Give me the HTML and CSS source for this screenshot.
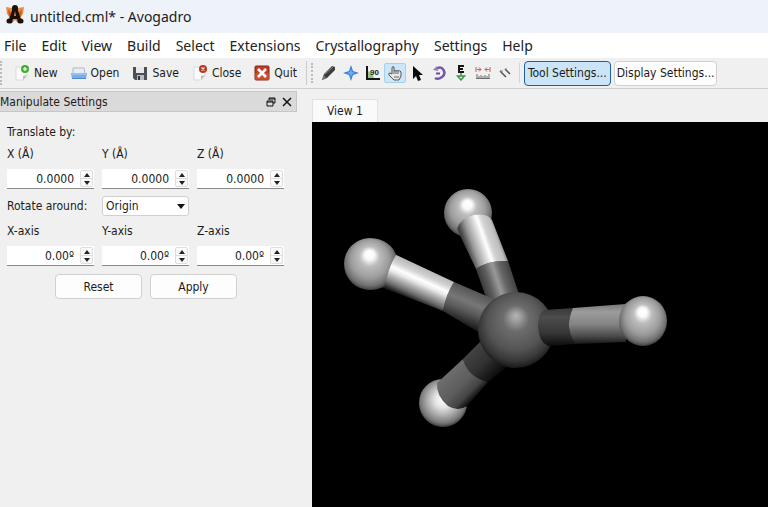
FILE: index.html
```html
<!DOCTYPE html>
<html lang="en">
<head>
<meta charset="utf-8">
<title>untitled.cml* - Avogadro</title>
<link rel="stylesheet" href="styles.css">
</head>
<body>
<header class="titlebar">
  <svg class="logo" width="20" height="20" viewBox="0 0 20 20">
    <path d="M1 2l6 1 3 4 3-4 6-1-1 7-3 3 3 5-4 2-4-4-4 4-4-2 3-5-3-3z" fill="#ef8a45"/>
    <path d="M3 4l4 5-3 4zM17 4l-4 5 3 4z" fill="#c85a1c"/>
    <path d="M8 2h4l4 13h2v3h-5l-1-4H8l-1 4H2v-3h2zM10 6l-1 5h2z" fill="#17100d" fill-rule="evenodd"/>
    <circle cx="10" cy="3" r="3" fill="#17100d"/>
    <circle cx="4" cy="16" r="2.500" fill="#17100d"/>
    <circle cx="16" cy="16" r="2.500" fill="#17100d"/>
  </svg>
  <span>untitled.cml* - Avogadro</span>
</header>
<nav class="menubar">
  <a href="#">File</a>
  <a href="#">Edit</a>
  <a href="#">View</a>
  <a href="#">Build</a>
  <a href="#">Select</a>
  <a href="#">Extensions</a>
  <a href="#">Crystallography</a>
  <a href="#">Settings</a>
  <a href="#">Help</a>
</nav>
<div class="toolbar">
  <div class="files">
    <button class="file">
      <svg width="16" height="16" viewBox="0 0 16 16"><path d="M2 2h11v9l-4 4H2z" fill="#fbfbfb" stroke="#dadada"/><path d="M13 10l-4 5v-4z" fill="#bbb"/><circle cx="11" cy="4" r="4" fill="#3fae35"/><path d="M11 2v4M9 4h4" stroke="#d7f7cf" stroke-width="1.500"/></svg>New</button>
    <button class="file">
      <svg width="16" height="16" viewBox="0 0 16 16"><path d="M2 3h11l1 6H2z" fill="#e8eef5" stroke="#a9b9cc"/><path d="M0 8h16l-1 6H1z" fill="#79aee8"/><path d="M1 9h14" stroke="#b2d3f8"/><path d="M1 13.500h14" stroke="#5286c4"/></svg>Open</button>
    <button class="file">
      <svg width="16" height="16" viewBox="0 0 16 16"><path d="M1 2h14v13H3l-2-2z" fill="#4b4f56"/><path d="M4 2h8v6H4z" fill="#e6e8ea"/><path d="M5 10h7v5H5z" fill="#b9bdc2"/><path d="M6 11h2v4H6z" fill="#33363b"/></svg>Save</button>
    <button class="file">
      <svg width="16" height="16" viewBox="0 0 16 16"><path d="M2 2h11v9l-4 4H2z" fill="#fbfbfb" stroke="#dadada"/><path d="M13 10l-4 5v-4z" fill="#bbb"/><circle cx="11" cy="4" r="4" fill="#b9381f"/><path d="M9.500 2.500l3 3m0-3l-3 3" stroke="#ffe6df" stroke-width="1.300"/></svg>Close</button>
    <button class="file">
      <svg width="16" height="16" viewBox="0 0 16 16"><rect x="1" y="1" width="14" height="14" rx="1" fill="#c33c22" stroke="#7c2b1c"/><path d="M1 8h14v7H1z" fill="#d9623a" opacity=".5"/><path d="M4 4l8 8m0-8l-8 8" stroke="#fff" stroke-width="2.500"/></svg>Quit</button>
  </div>
  <div class="tools">
    <button class="tool" aria-label="Draw"><svg width="16" height="16" viewBox="0 0 16 16"><path d="M1 15l2-6 8-8 3 1v3l-8 8z" fill="#3b3d3d"/><path d="M4 9l8-7" stroke="#858989"/><path d="M1 15l2-5 2 3z" fill="#777"/></svg></button>
    <button class="tool" aria-label="Navigate"><svg width="16" height="16" viewBox="0 0 16 16"><path d="M8 0l2 6 6 2-6 2-2 6-2-6-6-2 6-2z" fill="#3a7fdd"/><path d="M8 4l1 3 3 1-3 1-1 3-1-3-3-1 3-1z" fill="#71aef4"/></svg></button>
    <button class="tool" aria-label="Bond centric"><svg width="16" height="16" viewBox="0 0 16 16"><path d="M2 6a8 8 0 0 1 7 8H2z" fill="#8cc68a"/><path d="M2 1v13h13" fill="none" stroke="#151515" stroke-width="2"/><text x="5" y="10" class="ninety">90</text></svg></button>
    <button class="tool active" aria-label="Manipulate"><svg width="16" height="16" viewBox="0 0 16 16"><path d="M5 9V3q0-2 2-1v4q1-1 2 0 1-1 2 0 2-1 3 1v4l-2 4H7L2 10q-1-2 1-2z" fill="#e8e8e8" stroke="#555"/><path d="M7 6v3M9 6v3M11 6v3M7 12h5" stroke="#666"/></svg></button>
    <button class="tool" aria-label="Select"><svg width="16" height="16" viewBox="0 0 16 16"><path d="M4 1v13l3-3 2 5 3-1-2-5h4z" fill="#080808"/></svg></button>
    <button class="tool" aria-label="Auto rotate"><svg width="16" height="16" viewBox="0 0 16 16"><path d="M6 3.500Q10 1 12.500 5T11 12 4 13" fill="none" stroke="#7656a8" stroke-width="2.500"/><path d="M2 5l4-4 1 5z" fill="#9278bd"/><path d="M5 8.500h4" stroke="#6d4aa3" stroke-width="2"/></svg></button>
    <button class="tool" aria-label="Auto optimize"><svg width="16" height="16" viewBox="0 0 16 16"><path d="M11 1H6v6h5M6 4h4" fill="none" stroke="#151515" stroke-width="2"/><path d="M8 8v3M4.500 11h7L8 15z" fill="#dff2df" stroke="#3e9550" stroke-width="1.500"/></svg></button>
    <button class="tool" aria-label="Measure"><svg width="16" height="16" viewBox="0 0 16 16"><path d="M1 2v5M15 2v5M2 4.500h4M10 4.500h4M4 2.500l2 2-2 2M12 2.500l-2 2 2 2" fill="none" stroke="#c85a5a"/><path d="M1 13.500h14M2 9v4M4 11v2M6 10v3M8 11v2M10 10v3M12 11v2M14 9v4" stroke="#6d6d6d"/></svg></button>
    <button class="tool" aria-label="Align"><svg width="16" height="16" viewBox="0 0 16 16"><path d="M3 6l6 6M8 4l5 5" stroke="#555" stroke-width="1.500"/><path d="M3 6h3M8 4h2" stroke="#888"/></svg></button>
  </div>
  <div class="panels">
    <button class="push checked">Tool Settings...</button>
    <button class="push">Display Settings...</button>
  </div>
</div>
<main class="workspace">
  <aside class="dock">
    <div class="dock-title">
      <span>Manipulate Settings</span>
      <button aria-label="Float"><svg width="10" height="10" viewBox="0 0 10 10"><path d="M3 3V1h6v5H7M1 4h6v5H1zM3 2h6M1 5h6" fill="none" stroke="#111"/></svg></button>
      <button aria-label="Close panel"><svg width="10" height="10" viewBox="0 0 10 10"><path d="M1 1l8 8m0-8l-8 8" stroke="#111" stroke-width="1.500"/></svg></button>
    </div>
    <form class="settings">
      <p>Translate by:</p>
      <div class="triple">
        <label for="tx">X (Å)</label>
        <label for="ty">Y (Å)</label>
        <label for="tz">Z (Å)</label>
        <div class="spin"><input id="tx" type="text" value="0.0000"><div class="steps"><button type="button" aria-label="Increase X"></button><button type="button" aria-label="Decrease X"></button></div></div>
        <div class="spin"><input id="ty" type="text" value="0.0000"><div class="steps"><button type="button" aria-label="Increase Y"></button><button type="button" aria-label="Decrease Y"></button></div></div>
        <div class="spin"><input id="tz" type="text" value="0.0000"><div class="steps"><button type="button" aria-label="Increase Z"></button><button type="button" aria-label="Decrease Z"></button></div></div>
      </div>
      <div class="triple rotate">
        <label for="origin">Rotate around:</label>
        <div class="combo"><select id="origin"><option>Origin</option></select></div>
      </div>
      <div class="triple">
        <label for="rx">X-axis</label>
        <label for="ry">Y-axis</label>
        <label for="rz">Z-axis</label>
        <div class="spin"><input id="rx" type="text" value="0.00º"><div class="steps"><button type="button" aria-label="Increase X angle"></button><button type="button" aria-label="Decrease X angle"></button></div></div>
        <div class="spin"><input id="ry" type="text" value="0.00º"><div class="steps"><button type="button" aria-label="Increase Y angle"></button><button type="button" aria-label="Decrease Y angle"></button></div></div>
        <div class="spin"><input id="rz" type="text" value="0.00º"><div class="steps"><button type="button" aria-label="Increase Z angle"></button><button type="button" aria-label="Decrease Z angle"></button></div></div>
      </div>
      <div class="actions">
        <button type="reset" class="push">Reset</button>
        <button type="button" class="push">Apply</button>
      </div>
    </form>
  </aside>
  <section class="view">
    <div class="tabs"><button class="tab">View 1</button></div>
    <div class="canvas">
      <svg viewBox="312 122 456 385" preserveAspectRatio="xMidYMin meet">
        <defs>
          <radialGradient id="h" cx=".5" cy=".46" r=".56" fx=".49" fy=".3">
            <stop offset="0" stop-color="#fff"/>
            <stop offset=".16" stop-color="#fafafa"/>
            <stop offset=".34" stop-color="#bdbdbd"/>
            <stop offset=".65" stop-color="#9c9c9c"/>
            <stop offset=".86" stop-color="#707070"/>
            <stop offset="1" stop-color="#333"/>
          </radialGradient>
          <radialGradient id="h-low" cx=".5" cy=".45" r=".56" fx=".5" fy=".42">
            <stop offset="0" stop-color="#fff"/>
            <stop offset=".3" stop-color="#e4e4e4"/>
            <stop offset=".6" stop-color="#aaa"/>
            <stop offset=".85" stop-color="#767676"/>
            <stop offset="1" stop-color="#333"/>
          </radialGradient>
          <radialGradient id="c" cx=".5" cy=".44" r=".57" fx=".5" fy=".31">
            <stop offset="0" stop-color="#b4b4b4"/>
            <stop offset=".1" stop-color="#a0a0a0"/>
            <stop offset=".3" stop-color="#6c6c6c"/>
            <stop offset=".65" stop-color="#545454"/>
            <stop offset=".86" stop-color="#363636"/>
            <stop offset="1" stop-color="#151515"/>
          </radialGradient>
          <!-- each bond is shaded across its own width -->
          <linearGradient id="left-h" gradientUnits="userSpaceOnUse" x1="426" y1="268" x2="412" y2="299">
            <stop offset="0" stop-color="#b5b5b5"/><stop offset=".22" stop-color="#d2d2d2"/><stop offset=".38" stop-color="#fff"/><stop offset=".5" stop-color="#e8e8e8"/><stop offset=".62" stop-color="#bababa"/><stop offset=".85" stop-color="#6c6c6c"/><stop offset="1" stop-color="#222"/>
          </linearGradient>
          <linearGradient id="left-c" gradientUnits="userSpaceOnUse" x1="473" y1="290" x2="459" y2="324">
            <stop offset="0" stop-color="#555"/><stop offset=".35" stop-color="#777"/><stop offset=".6" stop-color="#5a5a5a"/><stop offset="1" stop-color="#151515"/>
          </linearGradient>
          <linearGradient id="top-h" gradientUnits="userSpaceOnUse" x1="467" y1="250" x2="501" y2="238">
            <stop offset="0" stop-color="#444"/><stop offset=".2" stop-color="#9c9c9c"/><stop offset=".45" stop-color="#e2e2e2"/><stop offset=".55" stop-color="#fff"/><stop offset=".68" stop-color="#d2d2d2"/><stop offset=".88" stop-color="#bdbdbd"/><stop offset="1" stop-color="#777"/>
          </linearGradient>
          <linearGradient id="top-c" gradientUnits="userSpaceOnUse" x1="478" y1="285" x2="514" y2="273">
            <stop offset="0" stop-color="#2b2b2b"/><stop offset=".3" stop-color="#5e5e5e"/><stop offset=".52" stop-color="#999"/><stop offset=".7" stop-color="#666"/><stop offset="1" stop-color="#3b3b3b"/>
          </linearGradient>
          <linearGradient id="right-h" x2="0" y2="1">
            <stop offset="0" stop-color="#777"/><stop offset=".2" stop-color="#9c9c9c"/><stop offset=".5" stop-color="#858585"/><stop offset=".8" stop-color="#4b4b4b"/><stop offset="1" stop-color="#171717"/>
          </linearGradient>
          <linearGradient id="right-c" x2="0" y2="1">
            <stop offset="0" stop-color="#393939"/><stop offset=".25" stop-color="#4c4c4c"/><stop offset=".65" stop-color="#373737"/><stop offset="1" stop-color="#0c0c0c"/>
          </linearGradient>
          <linearGradient id="low-h" gradientUnits="userSpaceOnUse" x1="450" y1="372" x2="475" y2="397">
            <stop offset="0" stop-color="#6c6c6c"/><stop offset=".5" stop-color="#5d5d5d"/><stop offset=".8" stop-color="#444"/><stop offset="1" stop-color="#111"/>
          </linearGradient>
          <linearGradient id="low-c" gradientUnits="userSpaceOnUse" x1="470" y1="351" x2="496" y2="377">
            <stop offset="0" stop-color="#444"/><stop offset=".5" stop-color="#313131"/><stop offset="1" stop-color="#0a0a0a"/>
          </linearGradient>
        </defs>
        <circle cx="468" cy="213" r="24" fill="url(#h)"/>
        <path d="M476 269Q488 260 508 261L521 300H487z" fill="url(#top-c)"/>
        <path d="M457 229Q460 218 474 215 487 213 492 220L508 261Q488 260 476 269z" fill="url(#top-h)"/>
        <path d="M454 282L496 300 480 333 443 311Q446 294 454 282z" fill="url(#left-c)"/>
        <path d="M390 252L454 282Q446 294 443 311L379 286z" fill="url(#left-h)"/>
        <path d="M370 238C384 238 394 247 396 255Q388 268 385 286 378 290 370 290A26 26 0 0 1 370 238z" fill="url(#h)"/>
        <circle cx="443" cy="403" r="24" fill="url(#h-low)"/>
        <path d="M463 359L481 341 510 365 488 382Q468 377 463 359z" fill="url(#low-c)"/>
        <path d="M437 383L463 359Q468 377 488 382L467 406Q458 412 448 406 436 396 437 383z" fill="url(#low-h)"/>
        <circle cx="516" cy="330" r="38" fill="url(#c)"/>
        <path d="M545 310L573 308Q564 327 575 344L548 346Q539 342 538 327 538 312 545 310z" fill="url(#right-c)"/>
        <path d="M573 308L626 304V342L575 344Q564 327 573 308z" fill="url(#right-h)"/>
        <ellipse cx="643" cy="321" rx="24" ry="25" fill="url(#h)"/>
      </svg>
    </div>
  </section>
</main>
</body>
</html>
```
FILE: styles.css
```css
* {
  box-sizing: border-box;
}
body {
  margin: 0;
  min-height: 100vh;
  display: flex;
  flex-direction: column;
  background: #f0f0f0;
  color: #1b1b1b;
  font: 12px/16px "DejaVu Sans Condensed", "DejaVu Sans", sans-serif;
}
button, input, select {
  font: inherit;
  color: inherit;
  margin: 0;
  padding: 0;
  border: 0;
  background: none;
}
svg {
  display: block;
  flex: none;
}
.titlebar {
  display: flex;
  align-items: center;
  gap: 5px;
  height: 33px;
  padding-left: 5px;
  background: #eef3fa;
  font-family: "Noto Sans", sans-serif;
  font-size: 14px;
}
.logo {
  margin-bottom: 4px;
}
.menubar {
  display: flex;
  align-items: center;
  gap: 15px;
  height: 25px;
  padding-left: 4px;
  background: #fff;
  font-family: "Noto Sans", sans-serif;
  font-size: 14px;
}
.menubar a {
  color: #222;
  text-decoration: none;
}
.toolbar {
  display: flex;
  align-items: center;
  height: 31px;
  border-bottom: 1px solid #cfcfcf;
  white-space: nowrap;
}
.files {
  display: flex;
  gap: 13px;
  padding: 4px 9px 4px 12px;
  border-left: 2px dotted #bbb;
  border-right: 1px solid #ccc;
}
.file {
  display: flex;
  align-items: center;
  gap: 4px;
}
.tools {
  display: flex;
  margin-left: 4px;
  padding: 0 3px 0 5px;
  border-left: 2px dotted #bbb;
  border-right: 1px solid #d4d4d4;
}
.tool {
  width: 22px;
  height: 20px;
  padding: 1px 2px;
  border: 1px solid transparent;
  border-radius: 2px;
}
.tool.active {
  background: #cde6f7;
  border-color: #a5d0ee;
}
.ninety {
  font: bold 8px "Liberation Sans", sans-serif;
  fill: #222;
}
.panels {
  display: flex;
  gap: 3px;
  padding-left: 4px;
}
.push {
  height: 25px;
  padding: 0 2px;
  background: #fdfdfd;
  border: 1px solid #d0d0d0;
  border-radius: 4px;
}
.push.checked {
  padding: 0 3px;
  background: #cce4f7;
  border-color: #225f98;
}
.workspace {
  flex: 1;
  display: flex;
}
.dock {
  flex: 0 0 312px;
  padding: 2px 15px 0 0;
}
.dock-title {
  display: flex;
  align-items: center;
  gap: 6px;
  height: 21px;
  padding-right: 4px;
  background: #dadada;
  border: 1px solid #c6c6c6;
  border-left: 0;
}
.dock-title span {
  flex: 1;
}
.settings {
  padding: 12px 12px 0 7px;
}
.settings p {
  margin: 0 0 6px;
}
.triple {
  display: grid;
  grid-template-columns: repeat(3, 87px);
  gap: 7px 8px;
  align-items: center;
}
.rotate {
  margin: 7px 0;
}
.spin {
  display: flex;
  height: 20px;
  background: #fff;
  border-bottom: 1px solid #888;
}
.spin input {
  flex: 1;
  min-width: 0;
  padding-right: 5px;
  text-align: right;
}
.steps {
  display: flex;
  flex-direction: column;
  width: 13px;
  margin: 1px;
  border: 1px solid #ddd;
  border-radius: 2px;
  background: #fafafa;
}
.steps button {
  flex: 1;
  display: flex;
  align-items: center;
  justify-content: center;
}
.steps button::before {
  content: "";
  border: 3px solid transparent;
  border-top-width: 0;
  border-bottom: 4px solid #222;
}
.steps button + button {
  border-top: 1px solid #ddd;
}
.steps button + button::before {
  border-top: 4px solid #222;
  border-bottom-width: 0;
}
.combo {
  position: relative;
}
.combo select {
  display: block;
  appearance: none;
  width: 100%;
  height: 20px;
  padding-left: 3px;
  background: #fff;
  border: 1px solid #d0d0d0;
  border-radius: 3px;
}
.combo::after {
  content: "";
  position: absolute;
  top: 8px;
  right: 4px;
  border: 4px solid transparent;
  border-top: 5px solid #111;
  border-bottom: 0;
}
.actions {
  display: flex;
  justify-content: center;
  gap: 8px;
  margin-top: 8px;
}
.actions .push {
  width: 87px;
}
.view {
  flex: 1;
  display: flex;
  flex-direction: column;
  min-width: 0;
}
.tabs {
  padding-top: 10px;
}
.tab {
  height: 23px;
  padding: 0 14px;
  background: #fafafa;
  border: 1px solid #e2e2e2;
  border-bottom: 0;
}
.canvas {
  flex: 1;
  background: #000;
}
.canvas svg {
  width: 100%;
}
```
